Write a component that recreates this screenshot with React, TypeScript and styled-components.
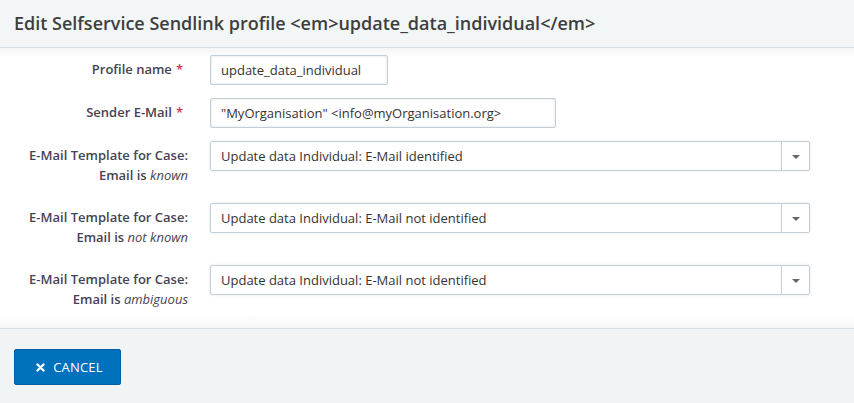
import React from "react";
import styled, { createGlobalStyle } from "styled-components";

const Global = createGlobalStyle`
  html, body { margin: 0; padding: 0; background: #fff; }
  body { font-family: "Open Sans", "Liberation Sans", sans-serif; color: #464354; }
  * { box-sizing: border-box; }
`;

const Dialog = styled.div`
  width: 854px;
  height: 403px;
  display: flex;
  flex-direction: column;
  background: #fff;
`;

const Header = styled.div`
  height: 48px;
  background: #f3f6f7;
  border-bottom: 1px solid #d3dde2;
  display: flex;
  align-items: center;
  padding: 0 14px 1px;
`;

const Title = styled.h1`
  margin: 0;
  font-size: 18px;
  font-weight: 600;
  color: #3e3e3e;
`;

const Body = styled.div`
  padding: 7px 0 2px;
  background: linear-gradient(#f4f4f4 0, #fff 10px, #fff calc(100% - 14px), #f6f6f6 100%);
  height: 280px;
`;

const Row = styled.div`
  display: flex;
  align-items: flex-start;
  margin-bottom: 13px;
`;

const Label = styled.div`
  width: 188px;
  text-align: right;
  font-size: 13px;
  font-weight: 600;
  line-height: 20px;
  color: #464354;
  padding: 4px 0 5px;
  em { font-weight: 400; font-style: italic; }
`;

const Req = styled.span`
  color: #cf3458;
  margin: 0 5px 0 4px;
`;

const Field = styled.div`
  margin-left: 22px;
`;

const TextInput = styled.div<{ $w: number }>`
  width: ${(p) => p.$w}px;
  height: 30px;
  border: 1px solid #c2cfd8;
  border-radius: 2px;
  box-shadow: inset 0 0 3px rgba(0, 0, 0, 0.12);
  background: #fff;
  display: flex;
  align-items: center;
  padding: 0 10px;
  font-size: 13px;
  color: #333;
  white-space: nowrap;
`;

const Select = styled.div`
  width: 600px;
  height: 30px;
  border: 1px solid #c2cfd8;
  border-radius: 2px;
  box-shadow: 0 0 3px rgba(0, 0, 0, 0.1);
  background: #fff;
  display: flex;
  align-items: stretch;
  font-size: 13px;
  color: #333;
`;

const SelectText = styled.div`
  flex: 1;
  display: flex;
  align-items: center;
  padding: 0 10px;
`;

const Arrow = styled.div`
  width: 28px;
  border-left: 1px solid #c2cfd8;
  display: flex;
  align-items: center;
  justify-content: center;
  &::after {
    content: "";
    border-left: 4px solid transparent;
    border-right: 4px solid transparent;
    border-top: 4px solid #666;
    margin-top: 1px;
  }
`;

const Footer = styled.div`
  flex: 1;
  background: #f1f4f5;
  border-top: 1px solid #d3dde2;
  padding: 20px 14px 0;
`;

const Button = styled.button`
  height: 36px;
  width: 107px;
  background: #0071bd;
  border: 1px solid #0060a3;
  border-radius: 2px;
  color: #fff;
  font-family: "Open Sans", "Liberation Sans", sans-serif;
  font-size: 13px;
  font-weight: 400;
  letter-spacing: 0.2px;
  display: flex;
  align-items: center;
  justify-content: center;
  gap: 8px;
  padding: 0 0 0 4px;
  cursor: pointer;
`;

const XIcon = () => (
  <svg width="9" height="9" viewBox="0 0 9 9">
    <path d="M1.5 1.5 L7.5 7.5 M7.5 1.5 L1.5 7.5" stroke="#fff" strokeWidth="2.4" strokeLinecap="round" />
  </svg>
);

const templates = [
  { state: "known", value: "Update data Individual: E-Mail identified" },
  { state: "not known", value: "Update data Individual: E-Mail not identified" },
  { state: "ambiguous", value: "Update data Individual: E-Mail not identified" },
];

export default function App() {
  return (
    <Dialog>
      <Global />
      <Header>
        <Title>Edit Selfservice Sendlink profile &lt;em&gt;update_data_individual&lt;/em&gt;</Title>
      </Header>
      <Body>
        <Row>
          <Label>
            Profile name<Req>*</Req>
          </Label>
          <Field>
            <TextInput $w={178}>update_data_individual</TextInput>
          </Field>
        </Row>
        <Row>
          <Label>
            Sender E-Mail<Req>*</Req>
          </Label>
          <Field>
            <TextInput $w={346}>"MyOrganisation" &lt;info@myOrganisation.org&gt;</TextInput>
          </Field>
        </Row>
        {templates.map((t, i) => (
          <Row key={i}>
            <Label>
              E-Mail Template for Case:
              <br />
              Email is <em>{t.state}</em>
            </Label>
            <Field>
              <Select>
                <SelectText>{t.value}</SelectText>
                <Arrow />
              </Select>
            </Field>
          </Row>
        ))}
      </Body>
      <Footer>
        <Button>
          <XIcon />
          CANCEL
        </Button>
      </Footer>
    </Dialog>
  );
}
